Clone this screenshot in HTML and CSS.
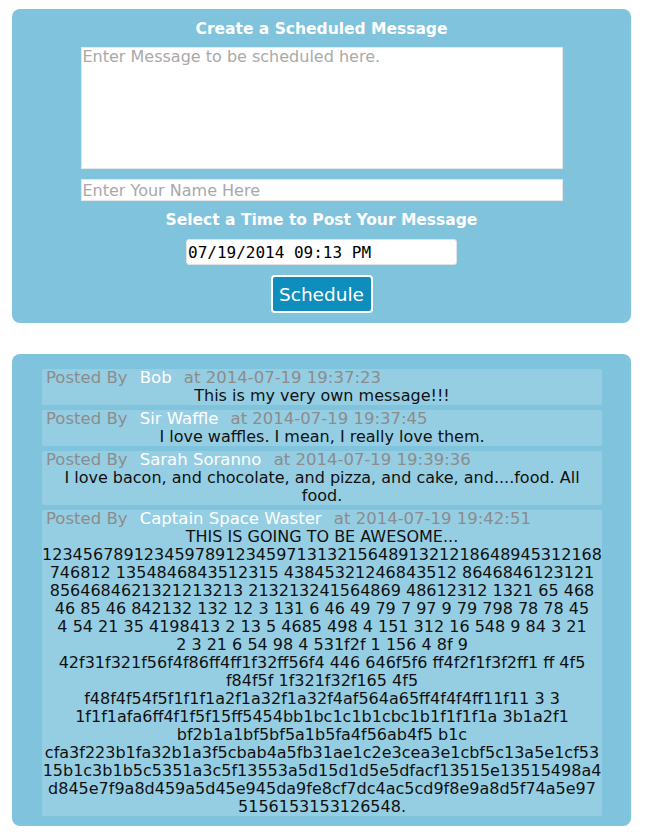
FILE: index.html
```html
<!DOCTYPE html>
<html>
<head>
<meta charset="utf-8">
<title>Scheduled Messages</title>
<link rel="stylesheet" href="styles.css">
</head>
<body>
<section class="panel composer">
  <h2 class="title">Create a Scheduled Message</h2>
  <textarea class="message-box" placeholder="Enter Message to be scheduled here."></textarea>
  <input class="name-box" type="text" placeholder="Enter Your Name Here">
  <h2 class="title subtitle">Select a Time to Post Your Message</h2>
  <input class="time-box" type="text" value="07/19/2014 09:13 PM">
  <button class="schedule-btn" type="button">Schedule</button>
</section>

<section class="panel feed">
  <article class="post">
    <div class="meta">Posted By <span class="author">Bob</span> at 2014-07-19 19:37:23</div>
    <div class="body">This is my very own message!!!</div>
  </article>
  <article class="post">
    <div class="meta">Posted By <span class="author">Sir Waffle</span> at 2014-07-19 19:37:45</div>
    <div class="body">I love waffles. I mean, I really love them.</div>
  </article>
  <article class="post">
    <div class="meta">Posted By <span class="author">Sarah Soranno</span> at 2014-07-19 19:39:36</div>
    <div class="body">I love bacon, and chocolate, and pizza, and cake, and....food. All food.</div>
  </article>
  <article class="post">
    <div class="meta">Posted By <span class="author">Captain Space Waster</span> at 2014-07-19 19:42:51</div>
    <div class="body">THIS IS GOING TO BE AWESOME...<br>1234567891234597891234597131321564891321218648945312168<br>746812 1354846843512315 43845321246843512 8646846123121<br>8564684621321213213 213213241564869 48612312 1321 65 468<br>46 85 46 842132 132 12 3 131 6 46 49 79 7 97 9 79 798 78 78 45<br>4 54 21 35 4198413 2 13 5 4685 498 4 151 312 16 548 9 84 3 21<br>2 3 21 6 54 98 4 531f2f 1 156 4 8f 9<br>42f31f321f56f4f86ff4ff1f32ff56f4 446 646f5f6 ff4f2f1f3f2ff1 ff 4f5<br>f84f5f 1f321f32f165 4f5<br>f48f4f54f5f1f1f1a2f1a32f1a32f4af564a65ff4f4f4ff11f11 3 3<br>1f1f1afa6ff4f1f5f15ff5454bb1bc1c1b1cbc1b1f1f1f1a 3b1a2f1<br>bf2b1a1bf5bf5a1b5fa4f56ab4f5 b1c<br>cfa3f223b1fa32b1a3f5cbab4a5fb31ae1c2e3cea3e1cbf5c13a5e1cf53<br>15b1c3b1b5c5351a3c5f13553a5d15d1d5e5dfacf13515e13515498a4<br>d845e7f9a8d459a5d45e945da9fe8cf7dc4ac5cd9f8e9a8d5f74a5e97<br>5156153153126548.</div>
  </article>
</section>
</body>
</html>
```

FILE: styles.css
```css
* { box-sizing: border-box; }

html, body {
  margin: 0;
  padding: 0;
  background: #ffffff;
}

body {
  font-family: "DejaVu Sans", Verdana, sans-serif;
  font-size: 16px;
  color: #111111;
  padding: 9px 16px 13px 12px;
}

.panel {
  background: #80c3dd;
  border-radius: 8px;
}

.composer {
  display: flex;
  flex-direction: column;
  align-items: center;
  padding: 9px 0 10px;
}

.title {
  margin: 0;
  font-family: "DejaVu Sans", Verdana, sans-serif;
  font-weight: bold;
  font-size: 15.5px;
  line-height: 22px;
  color: #ffffff;
  text-align: center;
}

.subtitle {
  margin-top: 8px;
}

.message-box,
.name-box {
  width: 482px;
  margin: 7px 0 0;
  padding: 0 1px;
  border: 1px solid #e6e6e6;
  background: #ffffff;
  font-family: "DejaVu Sans", Verdana, sans-serif;
  font-size: 16px;
  color: #111111;
  border-radius: 0;
  outline: none;
}

.message-box {
  height: 122px;
  resize: none;
  line-height: 18px;
}

.name-box {
  height: 22px;
  margin-top: 10px;
  line-height: 20px;
}

.message-box::placeholder,
.name-box::placeholder {
  color: #a9a9a9;
  opacity: 1;
}

.time-box {
  width: 271px;
  height: 26px;
  margin-top: 8px;
  padding: 0 1px;
  border: 1px solid #e2e2e2;
  border-radius: 3px;
  background: #ffffff;
  font-family: "DejaVu Sans Mono", monospace;
  font-size: 16px;
  color: #000000;
  outline: none;
}

.schedule-btn {
  width: 102px;
  height: 38px;
  margin-top: 10px;
  padding: 0;
  border: 2px solid #ffffff;
  border-radius: 4px;
  background: #0f8dbd;
  color: #ffffff;
  font-family: "DejaVu Sans", Verdana, sans-serif;
  font-size: 18.5px;
  cursor: pointer;
}

.feed {
  margin-top: 31px;
  padding: 15px 29px 10px 30px;
  display: flex;
  flex-direction: column;
  gap: 5px;
}

.post {
  background: #95cee3;
  border-radius: 2px;
  line-height: 18px;
}

.meta {
  padding: 0 4px;
  font-size: 16.5px;
  color: #8c8c8c;
  text-align: left;
}

.author {
  color: #ffffff;
  padding: 0 7px;
}

.body {
  text-align: center;
  color: #111111;
  white-space: nowrap;
}

.post:nth-child(3) .body {
  white-space: normal;
  padding: 0 4px;
}
```
